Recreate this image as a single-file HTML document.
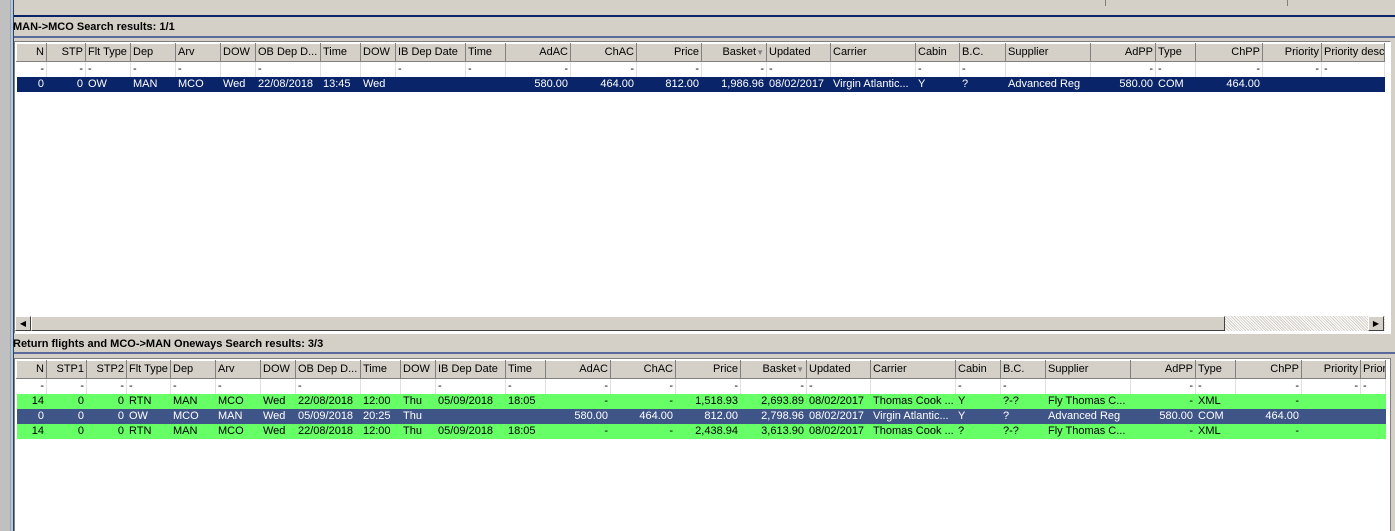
<!DOCTYPE html>
<html><head><meta charset="utf-8"><style>
html,body{margin:0;width:1395px;height:531px;overflow:hidden}
body{background:#d4d0c8;position:relative;font-family:"Liberation Sans",sans-serif;font-size:11px;color:#000}
.a{position:absolute}
table{border-collapse:collapse;table-layout:fixed;position:absolute;font-size:11px}
td{padding:0 2px;white-space:nowrap;overflow:hidden;height:15px;line-height:15px;border-right:1px solid #e0e0e0}
tr.h td{height:17px;line-height:17px;background:#d4d0c8;border-right:1px solid #808080;border-left:1px solid #fff;border-bottom:1px solid #808080;border-top:1px solid #fff}
td.r{text-align:right}
tr.f td{background:#fff}
tr.s td{background:#0a246a;color:#fff;border-right-color:#0a246a}
tr.d td{background:#3f5587;color:#fff;border-right-color:#3f5587}
tr.g td{background:#66ff66;border-right-color:#66ff66}
.t{font-weight:bold;font-size:11px}
</style></head><body>
<div class="a" style="left:0;top:0;width:10px;height:531px;background:#c0c0c0;border-right:1px solid #a0a0a0"></div>
<div class="a" style="left:11px;top:0;width:2px;height:531px;background:#a6caf0"></div>
<div class="a" style="left:13px;top:0;width:1px;height:531px;background:#404040"></div>
<div class="a" style="left:1105px;top:0;width:1px;height:6px;background:#808080"></div>
<div class="a" style="left:1287px;top:0;width:1px;height:6px;background:#808080"></div>
<div class="a" style="left:14px;top:15px;width:1381px;height:2px;background:#0a246a"></div>
<div class="a t" style="left:13px;top:21px">MAN-&gt;MCO Search results: 1/1</div>
<div class="a" style="left:14px;top:36px;width:1381px;height:2px;background:#5a6a9a"></div>
<div class="a" style="left:14px;top:41px;width:1375px;height:291px;background:#fff;border:1px solid #808080;border-right-color:#fff;border-bottom-color:#fff"></div>
<table style="left:16px;top:43px;width:1368px">
<colgroup><col style="width:30px"><col style="width:39px"><col style="width:45px"><col style="width:45px"><col style="width:45px"><col style="width:35px"><col style="width:65px"><col style="width:40px"><col style="width:35px"><col style="width:70px"><col style="width:40px"><col style="width:65px"><col style="width:66px"><col style="width:65px"><col style="width:65px"><col style="width:64px"><col style="width:85px"><col style="width:44px"><col style="width:46px"><col style="width:85px"><col style="width:65px"><col style="width:40px"><col style="width:67px"><col style="width:59px"><col style="width:63px"></colgroup>
<tr class="h"><td class="r">N</td><td class="r">STP</td><td>Flt Type</td><td>Dep</td><td>Arv</td><td>DOW</td><td>OB Dep D...</td><td>Time</td><td>DOW</td><td>IB Dep Date</td><td>Time</td><td class="r">AdAC</td><td class="r">ChAC</td><td class="r">Price</td><td class="r">Basket<span style="color:#808080;font-size:8px">▼</span></td><td>Updated</td><td>Carrier</td><td>Cabin</td><td>B.C.</td><td>Supplier</td><td class="r">AdPP</td><td>Type</td><td class="r">ChPP</td><td class="r">Priority</td><td>Priority descr</td></tr>
<tr class="f"><td class="r">-</td><td class="r">-</td><td>-</td><td>-</td><td>-</td><td></td><td>-</td><td></td><td></td><td>-</td><td>-</td><td class="r">-</td><td class="r">-</td><td class="r">-</td><td class="r">-</td><td>-</td><td></td><td>-</td><td>-</td><td></td><td class="r">-</td><td>-</td><td class="r">-</td><td class="r">-</td><td>-</td></tr>
<tr class="s"><td class="r">0</td><td class="r">0</td><td>OW</td><td>MAN</td><td>MCO</td><td>Wed</td><td>22/08/2018</td><td>13:45</td><td>Wed</td><td></td><td></td><td class="r">580.00</td><td class="r">464.00</td><td class="r">812.00</td><td class="r">1,986.96</td><td>08/02/2017</td><td>Virgin Atlantic...</td><td>Y</td><td>?</td><td>Advanced Reg</td><td class="r">580.00</td><td>COM</td><td class="r">464.00</td><td></td><td></td></tr>
</table>
<div class="a" style="left:15px;top:316px;width:1370px;height:15px;background:#e8e6e0;background-image:repeating-linear-gradient(45deg,#d4d0c8 0 1px,#fff 1px 2px)"></div>
<div class="a" style="left:15px;top:316px;width:14px;height:13px;background:#d4d0c8;border:1px solid;border-color:#fff #404040 #404040 #fff;font-size:8px;line-height:13px;text-align:center">◀</div>
<div class="a" style="left:31px;top:316px;width:1192px;height:13px;background:#d4d0c8;border:1px solid;border-color:#fff #404040 #404040 #fff"></div>
<div class="a" style="left:1368px;top:316px;width:14px;height:13px;background:#d4d0c8;border:1px solid;border-color:#fff #404040 #404040 #fff;font-size:8px;line-height:13px;text-align:center">▶</div>
<div class="a t" style="left:13px;top:338px">Return flights and MCO-&gt;MAN Oneways Search results: 3/3</div>
<div class="a" style="left:14px;top:352px;width:1381px;height:2px;background:#5a6a9a"></div>
<div class="a" style="left:14px;top:358px;width:1375px;height:180px;background:#fff;border:1px solid #808080"></div>
<table style="left:16px;top:360px;width:1369px">
<colgroup><col style="width:30px"><col style="width:40px"><col style="width:40px"><col style="width:44px"><col style="width:45px"><col style="width:45px"><col style="width:35px"><col style="width:65px"><col style="width:40px"><col style="width:35px"><col style="width:70px"><col style="width:40px"><col style="width:65px"><col style="width:65px"><col style="width:65px"><col style="width:66px"><col style="width:64px"><col style="width:85px"><col style="width:45px"><col style="width:45px"><col style="width:85px"><col style="width:65px"><col style="width:40px"><col style="width:66px"><col style="width:59px"><col style="width:25px"></colgroup>
<tr class="h"><td class="r">N</td><td class="r">STP1</td><td class="r">STP2</td><td>Flt Type</td><td>Dep</td><td>Arv</td><td>DOW</td><td>OB Dep D...</td><td>Time</td><td>DOW</td><td>IB Dep Date</td><td>Time</td><td class="r">AdAC</td><td class="r">ChAC</td><td class="r">Price</td><td class="r">Basket<span style="color:#808080;font-size:8px">▼</span></td><td>Updated</td><td>Carrier</td><td>Cabin</td><td>B.C.</td><td>Supplier</td><td class="r">AdPP</td><td>Type</td><td class="r">ChPP</td><td class="r">Priority</td><td>Prior</td></tr>
<tr class="f"><td class="r">-</td><td class="r">-</td><td class="r">-</td><td>-</td><td>-</td><td>-</td><td></td><td>-</td><td></td><td></td><td>-</td><td>-</td><td class="r">-</td><td class="r">-</td><td class="r">-</td><td class="r">-</td><td>-</td><td></td><td>-</td><td>-</td><td></td><td class="r">-</td><td>-</td><td class="r">-</td><td class="r">-</td><td>-</td></tr>
<tr class="g"><td class="r">14</td><td class="r">0</td><td class="r">0</td><td>RTN</td><td>MAN</td><td>MCO</td><td>Wed</td><td>22/08/2018</td><td>12:00</td><td>Thu</td><td>05/09/2018</td><td>18:05</td><td class="r">-</td><td class="r">-</td><td class="r">1,518.93</td><td class="r">2,693.89</td><td>08/02/2017</td><td>Thomas Cook ...</td><td>Y</td><td>?-?</td><td>Fly Thomas C...</td><td class="r">-</td><td>XML</td><td class="r">-</td><td></td><td></td></tr>
<tr class="d"><td class="r">0</td><td class="r">0</td><td class="r">0</td><td>OW</td><td>MCO</td><td>MAN</td><td>Wed</td><td>05/09/2018</td><td>20:25</td><td>Thu</td><td></td><td></td><td class="r">580.00</td><td class="r">464.00</td><td class="r">812.00</td><td class="r">2,798.96</td><td>08/02/2017</td><td>Virgin Atlantic...</td><td>Y</td><td>?</td><td>Advanced Reg</td><td class="r">580.00</td><td>COM</td><td class="r">464.00</td><td></td><td></td></tr>
<tr class="g"><td class="r">14</td><td class="r">0</td><td class="r">0</td><td>RTN</td><td>MAN</td><td>MCO</td><td>Wed</td><td>22/08/2018</td><td>12:00</td><td>Thu</td><td>05/09/2018</td><td>18:05</td><td class="r">-</td><td class="r">-</td><td class="r">2,438.94</td><td class="r">3,613.90</td><td>08/02/2017</td><td>Thomas Cook ...</td><td>?</td><td>?-?</td><td>Fly Thomas C...</td><td class="r">-</td><td>XML</td><td class="r">-</td><td></td><td></td></tr>
</table>
</body></html>
